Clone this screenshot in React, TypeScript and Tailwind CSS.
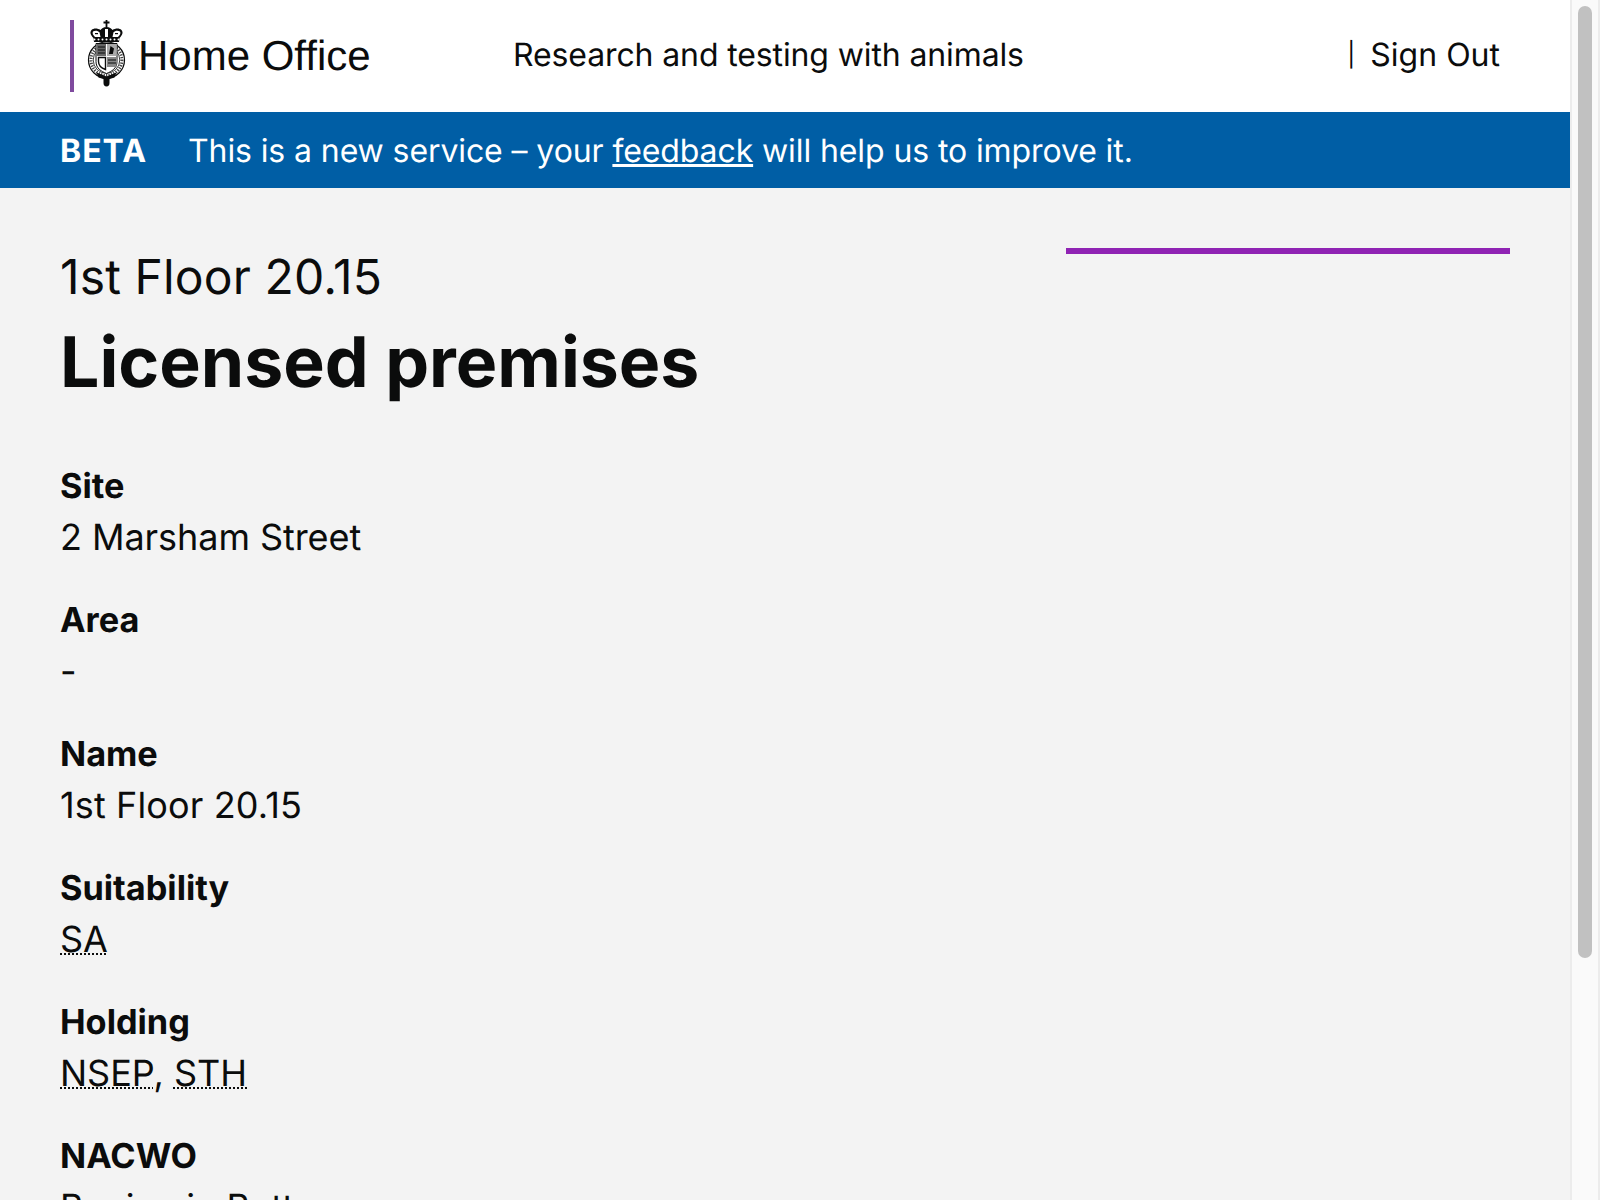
import React from "react";

function Crest() {
  return (
    <svg width="40" height="70" viewBox="0 0 40 70" className="shrink-0 -mt-[2px]">
      <path d="M19.500 0v7M16.500 2.500h6" stroke="#0b0c0c" strokeWidth="1.800" fill="none" />
      <path d="M19.500 7c3 0 5 1.500 6 3 3-2 7-2 9 0 2 2.500 1 5-2 8l-.5 4H7l-.5-4c-3-3-4-5.500-2-8 2-2 6-2 9 0 1-1.500 3-3 6-3z" fill="#0b0c0c" />
      <g fill="#fff">
        <path d="M6 11.500c2-1.300 5-1 6.500 .8l1 4.700H8c-2-1.800-3-4-2-5.500zM33 11.500c-2-1.300-5-1-6.500 .8l-1 4.700H31c2-1.800 3-4 2-5.500z" />
        <rect x="18" y="9" width="3" height="8" />
      </g>
      <g fill="#0b0c0c">
        <rect x="8" y="13" width="3" height="1.200" /><rect x="28" y="13" width="3" height="1.200" />
      </g>
      <g fill="#fff">
        <circle cx="7.500" cy="19.500" r="1" /><circle cx="11.500" cy="19.500" r="1" /><circle cx="15.500" cy="19.500" r="1" /><circle cx="19.500" cy="19.500" r="1" /><circle cx="23.500" cy="19.500" r="1" /><circle cx="27.500" cy="19.500" r="1" /><circle cx="31.500" cy="19.500" r="1" />
      </g>
      <circle cx="19.500" cy="40" r="18" fill="#fff" stroke="#0b0c0c" strokeWidth="1.200" />
      <circle cx="19.500" cy="40" r="15.500" fill="none" stroke="#444" strokeWidth="3" strokeDasharray="1.300 1.300" />
      <circle cx="19.500" cy="40" r="13.300" fill="#fff" stroke="#0b0c0c" strokeWidth="0.800" />
      <path d="M9 23.500h21v18c0 7-5.500 10-10.500 12C14.500 51.500 9 48.500 9 41.500z" fill="#fff" stroke="#0b0c0c" strokeWidth="1" />
      <rect x="9.500" y="24" width="9.500" height="12" fill="#666" />
      <rect x="20" y="24" width="9.500" height="12" fill="#aaa" />
      <rect x="20" y="37" width="9.500" height="10" fill="#888" />
      <path d="M22 34l1.500-8 3.500 2.500-1.200 5.500z" fill="#0b0c0c" />
      <path d="M11.500 37.500h7v12c-3-1-7-3-7-8z" fill="#fff" stroke="#0b0c0c" strokeWidth="1.400" />
      <path d="M11 27h7M11 30h7M11 33h7M21 40h8M21 43h8" stroke="#0b0c0c" strokeWidth="1" />
      <path d="M9.500 52.500l10 4 10-4-2 5-8 2.500-8-2.500z" fill="#0b0c0c" />
      <path d="M16.500 59h6v4c0 2-1 3.500-3 3.500s-3-1.500-3-3.500z" fill="#0b0c0c" />
    </svg>
  );
}

const items: { label: string; value: React.ReactNode; track: string }[] = [
  { label: "Site", value: "2 Marsham Street", track: "tracking-[-0.06px]" },
  { label: "Area", value: "-", track: "tracking-normal" },
  { label: "Name", value: "1st Floor 20.15", track: "tracking-[0.14px]" },
  { label: "Suitability", value: <abbr title="Small animals" className="decoration-2">SA</abbr>, track: "tracking-normal" },
  {
    label: "Holding",
    value: (
      <>
        <abbr title="Non-surgical, short-term" className="decoration-2">NSEP</abbr>, <abbr title="Short-term holding" className="decoration-2">STH</abbr>
      </>
    ),
    track: "tracking-normal",
  },
  { label: "NACWO", value: "Benjamin Butt", track: "tracking-normal" },
];

export default function App() {
  return (
    <div className="font-['Inter',sans-serif] [text-rendering:geometricPrecision] text-[#0b0c0c] bg-[#f3f3f3] h-screen overflow-hidden flex">
      <div className="flex-1 min-w-0">
        <header className="h-[112px] bg-white flex items-center">
          <div className="ml-[70px] w-[4px] h-[72px] bg-[#7f4a9e]" />
          <div className="ml-[13px]"><Crest /></div>
          <div className="ml-[11px] w-[375px] font-['Liberation_Sans',sans-serif] text-[42px] pb-[1px]">Home Office</div>
          <div className="text-[32px] tracking-[-0.12px] pb-[2px]">Research and testing with animals</div>
          <div className="ml-auto mr-[70px] text-[32px] flex items-center pb-[2px]">
            <span className="text-[24px] mr-[15px]">|</span>Sign Out
          </div>
        </header>
        <div className="h-[76px] bg-[#005ea5] text-white flex items-center px-[60px] text-[32px] pt-[2px]">
          <strong className="font-bold w-[128px] tracking-[1px]">BETA</strong>
          <span className="tracking-[-0.1px]">
            This is a new service – your <a className="underline" href="#">feedback</a> will help us to improve it.
          </span>
        </div>
        <main className="px-[60px] pt-[60px] flex justify-between">
          <div>
            <div className="text-[48px] leading-[58px] tracking-[0.14px]">1st Floor 20.15</div>
            <h1 className="text-[69.7px] leading-[80px] font-bold mt-[16px] mb-[57px]">Licensed premises</h1>
            {items.map((it) => (
              <div key={it.label} className="mb-[30px] text-[36px] leading-[52px]">
                <div className="font-bold text-[34.3px] pt-[2px] -mb-[2px]">{it.label}</div>
                <div className={it.track}>{it.value}</div>
              </div>
            ))}
          </div>
          <div className="w-[444px] h-[6px] bg-[#8f23b3]" />
        </main>
      </div>
      <div className="w-[30px] shrink-0 bg-[#fafafa] border-x-2 border-[#ececec] pt-[6px] px-[6px]">
        <div className="h-[952px] bg-[#c1c1c1] rounded-full" />
      </div>
    </div>
  );
}
